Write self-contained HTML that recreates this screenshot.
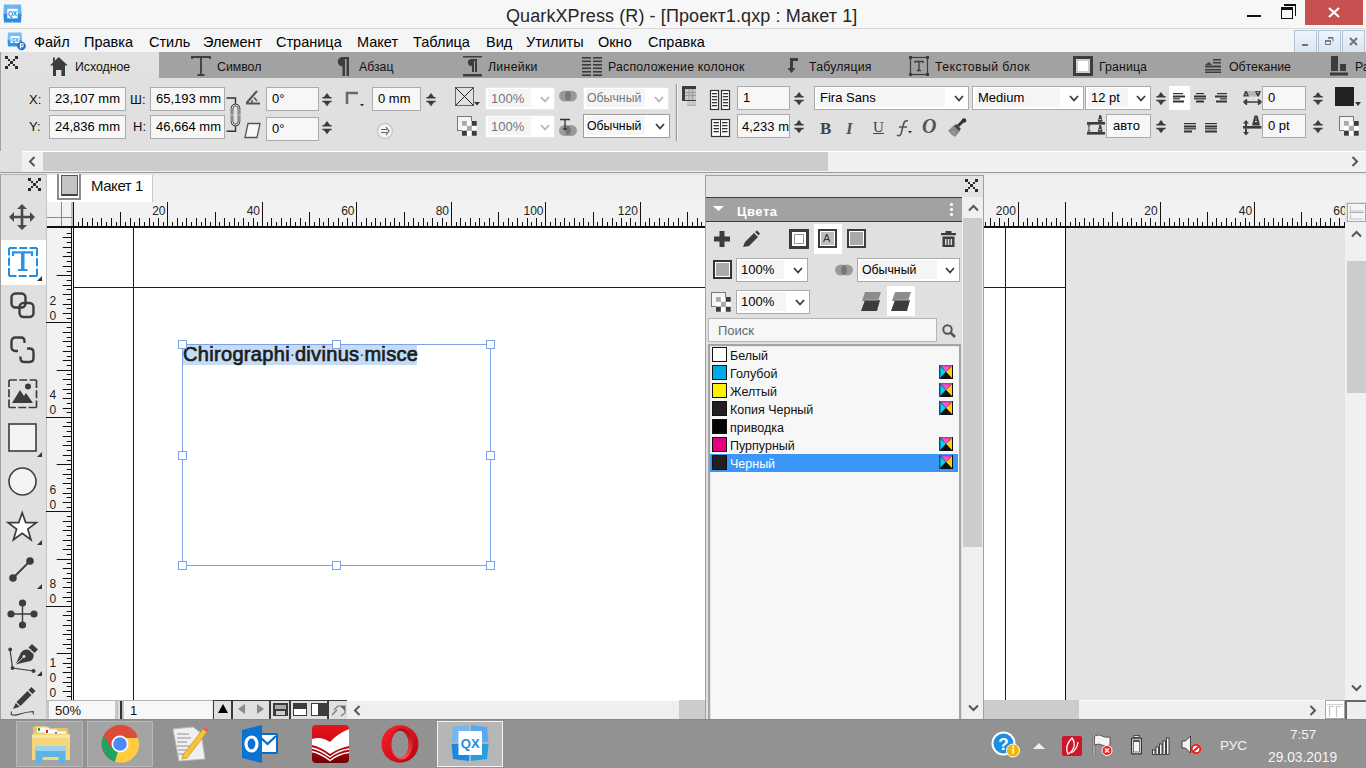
<!DOCTYPE html>
<html><head><meta charset="utf-8">
<style>
*{margin:0;padding:0;box-sizing:border-box}
html,body{width:1366px;height:768px;overflow:hidden;background:#e0e0e0;font-family:"Liberation Sans",sans-serif;color:#000}
.a{position:absolute}
.t{position:absolute;white-space:nowrap;line-height:1}
svg{position:absolute;overflow:visible}
.fld{position:absolute;background:#f7f7f7;border:1px solid #ababab}
.cmb{position:absolute;background:#fff;border:1px solid #ababab}
.spin{position:absolute;width:10px;height:18px}
</style></head><body>
<!-- TITLE BAR -->
<div class="a" style="left:0;top:0;width:1366px;height:29px;background:#f7f7f7;border-bottom:1px solid #d9d9d9"></div>
<svg style="left:3px;top:4px" width="19" height="19" viewBox="0 0 19 19"><path d="M1 0.5H18L18.6 9.5H0.4z" fill="#6cb3ef"/><path d="M0.4 9.5H18.6L18 18.5H1z" fill="#2a8ce4"/><path d="M9.5 0.5V2M9.5 17V18.5" stroke="#b8dcf8" stroke-width="0.8"/><rect x="4.3" y="4.8" width="10.4" height="9.6" fill="#fff"/><text x="9.5" y="12.3" font-size="6.4" font-weight="bold" fill="#2088e3" text-anchor="middle" font-family="Liberation Sans">QX</text></svg>
<div class="t" style="left:506px;top:7px;font-size:18px;color:#262626;letter-spacing:0.1px">QuarkXPress (R) - [Проект1.qxp : Макет 1]</div>
<div class="a" style="left:1247px;top:15px;width:14px;height:2px;background:#111"></div>
<div class="a" style="left:1281px;top:7px;width:12px;height:12px;border:1.5px solid #111;border-top-width:3px"></div>
<div class="a" style="left:1284px;top:4px;width:12px;height:12px;border-top:2px solid #111;border-right:1.5px solid #111"></div>
<div class="a" style="left:1305px;top:0;width:58px;height:25px;background:#c75050"></div>
<svg style="left:1328px;top:7px" width="12" height="11"><path d="M1 1L11 10M11 1L1 10" stroke="#fff" stroke-width="2.2"/></svg>
<!-- MENU BAR -->
<div class="a" style="left:0;top:29px;width:1366px;height:23px;background:#f4f5f7"></div>
<svg style="left:7px;top:32px" width="19" height="19" viewBox="0 0 19 19"><path d="M1 0.5H14.5L15 7.5H0.5z" fill="#7bbcf1"/><path d="M0.5 7.5H15L14.5 14.5H1z" fill="#3592e6"/><rect x="3.5" y="4" width="9" height="7" fill="#fff"/><text x="8" y="9.8" font-size="5.2" font-weight="bold" fill="#2a8ae3" text-anchor="middle" font-family="Liberation Sans">QX</text><circle cx="14.5" cy="14" r="4.3" fill="#1c6fc8"/><rect x="12.8" y="11.5" width="1.4" height="5" fill="#fff"/><rect x="13.5" y="11.8" width="2.5" height="2.8" fill="none" stroke="#fff" stroke-width="1"/></svg>
<div class="t" style="left:34px;top:35px;font-size:14.5px">Файл</div>
<div class="t" style="left:84px;top:35px;font-size:14.5px">Правка</div>
<div class="t" style="left:149px;top:35px;font-size:14.5px">Стиль</div>
<div class="t" style="left:203px;top:35px;font-size:14.5px">Элемент</div>
<div class="t" style="left:276px;top:35px;font-size:14.5px">Страница</div>
<div class="t" style="left:357px;top:35px;font-size:14.5px">Макет</div>
<div class="t" style="left:413px;top:35px;font-size:14.5px">Таблица</div>
<div class="t" style="left:486px;top:35px;font-size:14.5px">Вид</div>
<div class="t" style="left:526px;top:35px;font-size:14.5px">Утилиты</div>
<div class="t" style="left:598px;top:35px;font-size:14.5px">Окно</div>
<div class="t" style="left:648px;top:35px;font-size:14.5px">Справка</div>
<div class="a" style="left:1294px;top:30px;width:23px;height:22px;background:linear-gradient(#eef4fb,#d9e6f4);border:1px solid #b3c3d6;border-bottom:none"></div>
<div class="a" style="left:1318px;top:30px;width:23px;height:22px;background:linear-gradient(#eef4fb,#d9e6f4);border:1px solid #b3c3d6;border-bottom:none"></div>
<div class="a" style="left:1342px;top:30px;width:23px;height:22px;background:linear-gradient(#eef4fb,#d9e6f4);border:1px solid #b3c3d6;border-bottom:none"></div>
<div class="a" style="left:1302px;top:44px;width:6px;height:2px;background:#6b7480"></div>
<svg style="left:1325px;top:37px" width="9" height="8"><path d="M3 .5h5v4M.5 3.5h5v4h-5z" fill="none" stroke="#6b7480" stroke-width="1"/><path d="M3 1h5" stroke="#6b7480" stroke-width="1.5"/><path d="M.5 4h5" stroke="#6b7480" stroke-width="1.5"/></svg>
<svg style="left:1349px;top:37px" width="9" height="9"><path d="M1 1L8 8M8 1L1 8" stroke="#6b7480" stroke-width="2"/></svg>
<!-- TAB STRIP -->
<div class="a" style="left:0;top:52px;width:1366px;height:26px;background:#a2a2a2"></div>
<div class="a" style="left:0;top:52px;width:159px;height:26px;background:#e1e1e1;border-left:1px solid #a0a0a0"></div>
<svg style="left:5px;top:56px" width="13" height="13" viewBox="0 0 13 13"><g fill="#2a2a2a"><rect x="0" y="0" width="3" height="3"/><rect x="10" y="0" width="3" height="3"/><rect x="0" y="10" width="3" height="3"/><rect x="10" y="10" width="3" height="3"/><rect x="3" y="3" width="2" height="2"/><rect x="8" y="3" width="2" height="2"/><rect x="3" y="8" width="2" height="2"/><rect x="8" y="8" width="2" height="2"/><rect x="5" y="5" width="3" height="3"/></g></svg>
<svg style="left:50px;top:57px" width="18" height="20" viewBox="0 0 18 20"><path d="M0 8.5L8.7 0L17.8 8.5H15V19H11.4V13H6V19H3V8.5z" fill="#3c3c3c"/><rect x="3" y="0.5" width="1.8" height="6" fill="#3c3c3c"/></svg>
<div class="t" style="left:75px;top:61px;font-size:12.3px;color:#111">Исходное</div>
<svg style="left:191px;top:56px" width="20" height="20" viewBox="0 0 20 20"><path d="M1 3V1h18v2M10 1v18M6.5 19h7" fill="none" stroke="#3c3c3c" stroke-width="1.8"/></svg>
<div class="t" style="left:217px;top:61px;font-size:12.3px;color:#111">Символ</div>
<svg style="left:338px;top:57px" width="11" height="19" viewBox="0 0 11 19"><path d="M4.5 0H11v19H8.5V2H7v17H4.5v-9.5A4.75 4.75 0 0 1 4.5 0z" fill="#3c3c3c"/></svg>
<div class="t" style="left:359px;top:61px;font-size:12.3px;color:#111">Абзац</div>
<svg style="left:463px;top:56px" width="19" height="21" viewBox="0 0 19 21"><rect x="0" y="0" width="19" height="1.5" fill="#3c3c3c"/><rect x="0" y="18" width="19" height="2.5" fill="#3c3c3c"/><path d="M8 3H14v13H12V5H11v11H9v-6A3.5 3.5 0 0 1 8 3z" fill="#3c3c3c"/></svg>
<div class="t" style="left:488px;top:61px;font-size:12.3px;color:#111;letter-spacing:0.3px">Линейки</div>
<svg style="left:582px;top:57px" width="20" height="19" viewBox="0 0 20 19"><g fill="#3c3c3c"><rect x="0" y="0" width="9" height="1.6"/><rect x="0" y="3.5" width="9" height="1.6"/><rect x="0" y="7" width="9" height="1.6"/><rect x="0" y="10.5" width="9" height="1.6"/><rect x="0" y="14" width="9" height="1.6"/><rect x="0" y="17.4" width="9" height="1.6"/><rect x="11" y="0" width="9" height="1.6"/><rect x="11" y="3.5" width="9" height="1.6"/><rect x="11" y="7" width="9" height="1.6"/><rect x="11" y="10.5" width="9" height="1.6"/><rect x="11" y="14" width="9" height="1.6"/><rect x="11" y="17.4" width="9" height="1.6"/></g></svg>
<div class="t" style="left:608px;top:61px;font-size:12.3px;color:#111;letter-spacing:0.22px">Расположение колонок</div>
<svg style="left:787px;top:58px" width="11" height="15" viewBox="0 0 11 15"><path d="M3 0H11V3H6V10H8.5L4.5 15L0.5 10H3z" fill="#3c3c3c"/></svg>
<div class="t" style="left:809px;top:61px;font-size:12.3px;color:#111;letter-spacing:0.2px">Табуляция</div>
<svg style="left:909px;top:56px" width="20" height="20" viewBox="0 0 20 20"><rect x="1.5" y="1.5" width="17" height="17" fill="none" stroke="#3c3c3c" stroke-width="1.2"/><g fill="#3c3c3c"><rect x="0" y="0" width="3" height="3"/><rect x="17" y="0" width="3" height="3"/><rect x="0" y="17" width="3" height="3"/><rect x="17" y="17" width="3" height="3"/></g><path d="M6 7V5.5h8V7M10 5.5v9M8 14.5h4" fill="none" stroke="#3c3c3c" stroke-width="1.3"/></svg>
<div class="t" style="left:935px;top:61px;font-size:12.3px;color:#111;letter-spacing:0.4px">Текстовый блок</div>
<svg style="left:1073px;top:56px" width="20" height="20" viewBox="0 0 20 20"><rect x="0" y="0" width="20" height="20" fill="#3c3c3c"/><rect x="3" y="3" width="14" height="14" fill="#fff"/><rect x="4" y="4" width="12" height="12" fill="none" stroke="#888" stroke-width="0.8"/></svg>
<div class="t" style="left:1099px;top:61px;font-size:12.3px;color:#111;letter-spacing:0.12px">Граница</div>
<svg style="left:1205px;top:59px" width="16" height="14" viewBox="0 0 16 14"><g fill="#3c3c3c"><path d="M0 6L4 3l3 3z"/><rect x="8" y="0" width="8" height="1.5"/><rect x="8" y="3" width="8" height="1.5"/><rect x="0" y="6.5" width="16" height="2"/><rect x="0" y="10" width="16" height="1.5"/><rect x="0" y="12.5" width="16" height="1.5"/></g></svg>
<div class="t" style="left:1229px;top:61px;font-size:12.3px;color:#111">Обтекание</div>
<svg style="left:1330px;top:56px" width="18" height="20" viewBox="0 0 18 20"><g fill="#3c3c3c"><rect x="1" y="0" width="7" height="15"/><rect x="10" y="8" width="6" height="7"/><rect x="0" y="16.5" width="18" height="3"/></g></svg>
<div class="t" style="left:1355px;top:61px;font-size:12.3px;color:#111">Ра</div>
<div class="a" style="left:0;top:78px;width:1366px;height:73px;background:#e0e0e0;border-left:1px solid #a0a0a0"></div>
<div class="t" style="left:29px;top:92.5px;font-size:13px;color:#111">X:</div>
<div class="t" style="left:29px;top:120.0px;font-size:13px;color:#111">Y:</div>
<div class="t" style="left:130px;top:92.5px;font-size:13px;color:#111">Ш:</div>
<div class="t" style="left:133px;top:120.0px;font-size:13px;color:#111">H:</div>
<div class="a" style="left:49px;top:87px;width:77px;height:24px;background:#f7f7f7;border:1px solid #ababab"></div>
<div class="t" style="left:55px;top:92.1px;font-size:13px;color:#000">23,107 mm</div>
<div class="a" style="left:49px;top:115px;width:77px;height:24px;background:#f7f7f7;border:1px solid #ababab"></div>
<div class="t" style="left:55px;top:120.1px;font-size:13px;color:#000">24,836 mm</div>
<div class="a" style="left:150px;top:87px;width:75px;height:24px;background:#f7f7f7;border:1px solid #ababab"></div>
<div class="t" style="left:156px;top:92.1px;font-size:13px;color:#000">65,193 mm</div>
<div class="a" style="left:150px;top:115px;width:75px;height:24px;background:#f7f7f7;border:1px solid #ababab"></div>
<div class="t" style="left:156px;top:120.1px;font-size:13px;color:#000">46,664 mm</div>
<svg style="left:226px;top:96px" width="16" height="37" viewBox="0 0 16 37"><path d="M0.5 2H9.5V9M9.5 28V35.3H0.5" fill="none" stroke="#333" stroke-width="1.4"/><g fill="none" stroke-linecap="butt"><path d="M6 18.5V12.5A3.5 3.5 0 0 1 13 12.5V18.5" stroke="#333" stroke-width="2.6"/><path d="M6 18.5V12.5A3.5 3.5 0 0 1 13 12.5V18.5" stroke="#fff" stroke-width="0.9"/><path d="M6 19.5V25.5A3.5 3.5 0 0 0 13 25.5V19.5" stroke="#333" stroke-width="2.6"/><path d="M6 19.5V25.5A3.5 3.5 0 0 0 13 25.5V19.5" stroke="#fff" stroke-width="0.9"/></g></svg>
<svg style="left:245px;top:89px" width="16" height="16" viewBox="0 0 16 16"><path d="M1 14.5H15M1.5 14L12 2" fill="none" stroke="#555" stroke-width="2"/><path d="M9 8.5L12 12" stroke="#555" stroke-width="1.5"/><path d="M7 11v4" stroke="#555" stroke-width="1.5"/></svg>
<div class="a" style="left:266px;top:87px;width:53px;height:24px;background:#f7f7f7;border:1px solid #ababab"></div>
<div class="t" style="left:272px;top:92.1px;font-size:13px;color:#000">0°</div>
<svg style="left:322px;top:93px" width="10" height="14" viewBox="0 0 10 14"><path d="M5 0L8 4H9.6V5.4H0.4V4H2z M0.4 7.8H9.6V9.2H8L5 13.2L2 9.2H0.4z" fill="#3c3c3c"/></svg>
<svg style="left:244px;top:122px" width="17" height="17" viewBox="0 0 17 17"><path d="M4 1.5H16L13 15.5H1z" fill="#f7f7f7" stroke="#555" stroke-width="1.3"/></svg>
<div class="a" style="left:266px;top:117px;width:53px;height:24px;background:#f7f7f7;border:1px solid #ababab"></div>
<div class="t" style="left:272px;top:122.1px;font-size:13px;color:#000">0°</div>
<svg style="left:322px;top:121px" width="10" height="14" viewBox="0 0 10 14"><path d="M5 0L8 4H9.6V5.4H0.4V4H2z M0.4 7.8H9.6V9.2H8L5 13.2L2 9.2H0.4z" fill="#3c3c3c"/></svg>
<svg style="left:345px;top:91px" width="20" height="16" viewBox="0 0 20 16"><path d="M2 13V2H13" fill="none" stroke="#6a6a6a" stroke-width="2.6"/><path d="M15 13h4l-2 2.5z" fill="#333"/></svg>
<div class="a" style="left:372px;top:87px;width:49px;height:24px;background:#f7f7f7;border:1px solid #ababab"></div>
<div class="t" style="left:378px;top:92.1px;font-size:13px;color:#000">0 mm</div>
<svg style="left:426px;top:93px" width="10" height="14" viewBox="0 0 10 14"><path d="M5 0L8 4H9.6V5.4H0.4V4H2z M0.4 7.8H9.6V9.2H8L5 13.2L2 9.2H0.4z" fill="#3c3c3c"/></svg>
<svg style="left:376px;top:122px" width="18" height="18" viewBox="0 0 18 18"><circle cx="9" cy="9" r="7.5" fill="#f4f4f4" stroke="#c8c8c8" stroke-width="1.5"/><path d="M5 7.5h6M5 10.5h6M10 5l3 4-3 4" fill="none" stroke="#666" stroke-width="1.2"/></svg>
<svg style="left:455px;top:87px" width="26" height="20" viewBox="0 0 26 20"><rect x="0.5" y="0.5" width="18" height="18" fill="none" stroke="#666" stroke-width="1"/><path d="M0.5 0.5L18.5 18.5M18.5 0.5L0.5 18.5" stroke="#222" stroke-width="1"/><path d="M19 15h6l-3 3.5z" fill="#333"/></svg>
<div class="a" style="left:485px;top:87px;width:70px;height:23px;background:#fff;border:1px solid #e6e6e6"></div>
<div class="a" style="left:488px;top:89px;width:43px;height:18px;background:#f5f5f5"></div>
<div class="t" style="left:491px;top:91.6px;font-size:13px;color:#777">100%</div>
<svg style="left:540px;top:95.5px" width="10" height="7" viewBox="0 0 10 7"><path d="M1 1L5 5.5 9 1" fill="none" stroke="#b4b4b4" stroke-width="1.8"/></svg>
<div class="a" style="left:485px;top:115px;width:70px;height:23px;background:#fff;border:1px solid #e6e6e6"></div>
<div class="a" style="left:488px;top:117px;width:43px;height:18px;background:#f5f5f5"></div>
<div class="t" style="left:491px;top:119.6px;font-size:13px;color:#777">100%</div>
<svg style="left:540px;top:123.5px" width="10" height="7" viewBox="0 0 10 7"><path d="M1 1L5 5.5 9 1" fill="none" stroke="#b4b4b4" stroke-width="1.8"/></svg>
<svg style="left:457px;top:116px" width="21" height="21" viewBox="0 0 21 21"><rect x="0.5" y="0.5" width="14" height="14" fill="#f4f4f4" stroke="#777" stroke-width="1"/><rect x="5" y="5" width="4.9" height="4.9" fill="#aaa"/><rect x="9.9" y="5" width="4.9" height="4.9" fill="#fff"/><rect x="14.8" y="5" width="4.9" height="4.9" fill="#3c3c3c"/><rect x="5" y="9.9" width="4.9" height="4.9" fill="#fff"/><rect x="9.9" y="9.9" width="4.9" height="4.9" fill="#aaa"/><rect x="14.8" y="9.9" width="4.9" height="4.9" fill="#fff"/><rect x="5" y="14.8" width="4.9" height="4.9" fill="#3c3c3c"/><rect x="9.9" y="14.8" width="4.9" height="4.9" fill="#fff"/><rect x="14.8" y="14.8" width="4.9" height="4.9" fill="#3c3c3c"/></svg>
<svg style="left:559px;top:90px" width="18" height="12" viewBox="0 0 18 12"><ellipse cx="6" cy="6" rx="6" ry="5.5" fill="#9a9a9a"/><ellipse cx="12" cy="6" rx="6" ry="5.5" fill="#9a9a9a"/><ellipse cx="9" cy="6" rx="3" ry="5" fill="#777"/></svg>
<svg style="left:559px;top:118px" width="18" height="19" viewBox="0 0 18 19"><ellipse cx="6" cy="12.5" rx="6" ry="5.5" fill="#9a9a9a"/><ellipse cx="12" cy="12.5" rx="6" ry="5.5" fill="#9a9a9a"/><ellipse cx="9" cy="12.5" rx="3" ry="5" fill="#777"/><path d="M1 1.5H11M6 1.5V11M4 11h4" stroke="#333" stroke-width="1.3" fill="none"/></svg>
<div class="a" style="left:583px;top:87px;width:86px;height:23px;background:#fff;border:1px solid #e6e6e6"></div>
<div class="a" style="left:586px;top:89px;width:59px;height:18px;background:#f5f5f5"></div>
<div class="t" style="left:587px;top:92.2px;font-size:12.3px;color:#777">Обычный</div>
<svg style="left:654px;top:95.5px" width="10" height="7" viewBox="0 0 10 7"><path d="M1 1L5 5.5 9 1" fill="none" stroke="#b4b4b4" stroke-width="1.8"/></svg>
<div class="a" style="left:583px;top:114px;width:87px;height:24px;background:#fff;border:1px solid #9c9c9c"></div>
<div class="a" style="left:586px;top:116px;width:59px;height:19px;background:#f5f5f5"></div>
<div class="t" style="left:587px;top:119.7px;font-size:12.3px;color:#000">Обычный</div>
<svg style="left:655px;top:123.0px" width="10" height="7" viewBox="0 0 10 7"><path d="M1 1L5 5.5 9 1" fill="none" stroke="#3c3c3c" stroke-width="1.8"/></svg>
<div class="a" style="left:675px;top:84px;width:3px;height:57px;background:#9a9a9a;border-right:1px solid #f4f4f4;border-left:1px solid #d0d0d0"></div>
<svg style="left:682px;top:86px" width="15" height="20" viewBox="0 0 15 20"><rect x="0" y="0" width="14" height="15" fill="#3c3c3c"/><rect x="3" y="3" width="11" height="11" fill="#c4c4c4"/><path d="M3 6.5H14M3 9.5H14M7 3V14M10.5 3V14" stroke="#9a9a9a" stroke-width="1"/><rect x="5" y="15" width="9" height="4.5" fill="#c8c8c8"/><rect x="5" y="18.8" width="9" height="1" fill="#a8a8a8"/></svg>
<svg style="left:710px;top:90px" width="20" height="20" viewBox="0 0 20 20"><rect x="0.5" y="0.5" width="8" height="19" fill="#fff" stroke="#333" stroke-width="1.2"/><rect x="11.5" y="0.5" width="8" height="19" fill="#fff" stroke="#333" stroke-width="1.2"/><g fill="#333"><rect x="2" y="3" width="5" height="1.3"/><rect x="2" y="6" width="5" height="1.3"/><rect x="2" y="9" width="5" height="1.3"/><rect x="2" y="12" width="5" height="1.3"/><rect x="2" y="15" width="5" height="1.3"/><rect x="13" y="3" width="5" height="1.3"/><rect x="13" y="6" width="5" height="1.3"/><rect x="13" y="9" width="5" height="1.3"/><rect x="13" y="12" width="5" height="1.3"/><rect x="13" y="15" width="5" height="1.3"/></g></svg>
<div class="a" style="left:737px;top:86px;width:53px;height:24px;background:#f7f7f7;border:1px solid #ababab"></div>
<div class="t" style="left:743px;top:91.1px;font-size:13px;color:#000">1</div>
<svg style="left:794px;top:92px" width="10" height="14" viewBox="0 0 10 14"><path d="M5 0L8 4H9.6V5.4H0.4V4H2z M0.4 7.8H9.6V9.2H8L5 13.2L2 9.2H0.4z" fill="#3c3c3c"/></svg>
<svg style="left:711px;top:119px" width="19" height="18" viewBox="0 0 19 18"><rect x="0.5" y="0.5" width="18" height="17" fill="#fff" stroke="#333" stroke-width="1.2"/><g fill="#333"><rect x="2.5" y="3" width="5.5" height="1.3"/><rect x="2.5" y="6" width="5.5" height="1.3"/><rect x="2.5" y="9" width="5.5" height="1.3"/><rect x="2.5" y="12" width="5.5" height="1.3"/><rect x="11" y="3" width="5.5" height="1.3"/><rect x="11" y="6" width="5.5" height="1.3"/><rect x="11" y="9" width="5.5" height="1.3"/><rect x="11" y="12" width="5.5" height="1.3"/><rect x="9" y="1" width="1" height="16"/></g></svg>
<div class="a" style="left:737px;top:114px;width:53px;height:24px;background:#f7f7f7;border:1px solid #ababab;overflow:hidden"><div class="t" style="left:4px;top:5px;font-size:13px">4,233 mm</div></div>
<svg style="left:794px;top:120px" width="10" height="14" viewBox="0 0 10 14"><path d="M5 0L8 4H9.6V5.4H0.4V4H2z M0.4 7.8H9.6V9.2H8L5 13.2L2 9.2H0.4z" fill="#3c3c3c"/></svg>
<div class="a" style="left:814px;top:86px;width:155px;height:24px;background:#fff;border:1px solid #ababab"></div>
<div class="a" style="left:817px;top:88px;width:128px;height:19px;background:#f5f5f5"></div>
<div class="t" style="left:820px;top:91.1px;font-size:13px;color:#000">Fira Sans</div>
<svg style="left:954px;top:95.0px" width="10" height="7" viewBox="0 0 10 7"><path d="M1 1L5 5.5 9 1" fill="none" stroke="#3c3c3c" stroke-width="1.8"/></svg>
<div class="a" style="left:972px;top:86px;width:112px;height:24px;background:#fff;border:1px solid #ababab"></div>
<div class="a" style="left:975px;top:88px;width:85px;height:19px;background:#f5f5f5"></div>
<div class="t" style="left:978px;top:91.1px;font-size:13px;color:#000">Medium</div>
<svg style="left:1069px;top:95.0px" width="10" height="7" viewBox="0 0 10 7"><path d="M1 1L5 5.5 9 1" fill="none" stroke="#3c3c3c" stroke-width="1.8"/></svg>
<div class="a" style="left:1085px;top:86px;width:66px;height:24px;background:#fff;border:1px solid #ababab"></div>
<div class="a" style="left:1088px;top:88px;width:40px;height:19px;background:#f5f5f5"></div>
<div class="t" style="left:1091px;top:91.1px;font-size:13px;color:#000">12 pt</div>
<svg style="left:1136px;top:95.0px" width="10" height="7" viewBox="0 0 10 7"><path d="M1 1L5 5.5 9 1" fill="none" stroke="#3c3c3c" stroke-width="1.8"/></svg>
<svg style="left:1156px;top:92px" width="10" height="14" viewBox="0 0 10 14"><path d="M5 0L8 4H9.6V5.4H0.4V4H2z M0.4 7.8H9.6V9.2H8L5 13.2L2 9.2H0.4z" fill="#3c3c3c"/></svg>
<div class="t" style="left:820px;top:120px;font-size:17px;font-family:'Liberation Serif';font-weight:bold;color:#444">B</div>
<div class="t" style="left:846px;top:120px;font-size:17px;font-family:'Liberation Serif';font-style:italic;font-weight:bold;color:#555">I</div>
<div class="t" style="left:873px;top:120px;font-size:15px;font-family:'Liberation Serif';color:#444;text-decoration:underline">U</div>
<svg style="left:896px;top:119px" width="17" height="18" viewBox="0 0 17 18"><path d="M12 2C9 1 8 3 7 7L5 15C4 17 2 17 1 16M3 8h8" fill="none" stroke="#555" stroke-width="1.6"/><path d="M12 12h4l-2 2.5z" fill="#333"/></svg>
<div class="t" style="left:922px;top:116px;font-size:20px;font-family:'Liberation Serif';font-style:italic;font-weight:bold;color:#555">O</div>
<svg style="left:947px;top:118px" width="20" height="20" viewBox="0 0 20 20"><path d="M1 13L7 7L13 13L8 19z" fill="#8a8a8a"/><path d="M3 15l3 3M5 13l3 3" stroke="#aaa" stroke-width="1"/><path d="M7 8L9 6L14 11L12 13z" fill="#444"/><path d="M11 8L17 2" stroke="#333" stroke-width="3"/><circle cx="17" cy="2.5" r="2.3" fill="#333"/></svg>
<div class="a" style="left:1169px;top:86px;width:21px;height:24px;background:#fff"></div>
<svg style="left:1173px;top:93px" width="14" height="11" viewBox="0 0 14 11"><g fill="#333"><rect x="0" y="0" width="10" height="1.2"/><rect x="0" y="2.5" width="12" height="2"/><rect x="0" y="5.2" width="7" height="1.2"/><rect x="0" y="7.5" width="11" height="2"/></g></svg>
<svg style="left:1194px;top:93px" width="14" height="11" viewBox="0 0 14 11"><g fill="#333"><rect x="2" y="0" width="8" height="1.2"/><rect x="0" y="2.5" width="12" height="2"/><rect x="0" y="5.2" width="12" height="1.2"/><rect x="2" y="7.5" width="8" height="2"/></g></svg>
<svg style="left:1215px;top:93px" width="14" height="11" viewBox="0 0 14 11"><g fill="#333"><rect x="2" y="0" width="10" height="1.2"/><rect x="0" y="2.5" width="12" height="2"/><rect x="5" y="5.2" width="7" height="1.2"/><rect x="1" y="7.5" width="11" height="2"/></g></svg>
<svg style="left:1184px;top:123px" width="14" height="11" viewBox="0 0 14 11"><g fill="#333"><rect x="0" y="0" width="12" height="1.2"/><rect x="0" y="2.5" width="12" height="2"/><rect x="0" y="5.2" width="12" height="1.2"/><rect x="0" y="7.5" width="8" height="2"/></g></svg>
<svg style="left:1205px;top:123px" width="14" height="11" viewBox="0 0 14 11"><g fill="#333"><rect x="0" y="0" width="12" height="1.2"/><rect x="0" y="2.5" width="12" height="2"/><rect x="0" y="5.2" width="12" height="1.2"/><rect x="0" y="7.5" width="12" height="2"/></g></svg>
<svg style="left:1087px;top:115px" width="18" height="20" viewBox="0 0 18 20"><g fill="#3c3c3c"><rect x="0" y="7" width="18" height="2.6"/><rect x="0" y="17" width="18" height="2.6"/><path d="M10.8 6.8L12.4 0H14L15.6 6.8z"/><rect x="12.3" y="4" width="1.8" height="1" fill="#e0e0e0"/><path d="M10.8 16.8L12.4 10H14L15.6 16.8z"/><rect x="12.3" y="14" width="1.8" height="1" fill="#e0e0e0"/><path d="M0.5 10H3.5M0.5 16H3.5" stroke="#3c3c3c" stroke-width="1"/><rect x="1.5" y="10" width="1" height="6"/></g></svg>
<div class="a" style="left:1106px;top:114px;width:45px;height:24px;background:#f7f7f7;border:1px solid #ababab"></div>
<div class="t" style="left:1113px;top:119.1px;font-size:13px;color:#000">авто</div>
<svg style="left:1156px;top:120px" width="10" height="14" viewBox="0 0 10 14"><path d="M5 0L8 4H9.6V5.4H0.4V4H2z M0.4 7.8H9.6V9.2H8L5 13.2L2 9.2H0.4z" fill="#3c3c3c"/></svg>
<svg style="left:1243px;top:90px" width="19" height="17" viewBox="0 0 19 17"><rect x="5" y="1" width="8" height="5.5" fill="#b8b8b8"/><path d="M0 6.5L2 1H4L6 6.5z" fill="#444"/><rect x="2.2" y="4.2" width="1.6" height="0.9" fill="#ccc"/><path d="M12 1H18L16 6.5H14z" fill="#444"/><rect x="14.2" y="2" width="1.6" height="0.9" fill="#ccc"/><path d="M0.5 12H18.5M0.5 12L3 10M0.5 12L3 14M18.5 12L16 10M18.5 12L16 14M3.5 9V15M15.5 9V15" fill="none" stroke="#3c3c3c" stroke-width="1.3"/></svg>
<div class="a" style="left:1262px;top:86px;width:44px;height:24px;background:#f7f7f7;border:1px solid #ababab"></div>
<div class="t" style="left:1268px;top:91.1px;font-size:13px;color:#000">0</div>
<svg style="left:1313px;top:92px" width="10" height="14" viewBox="0 0 10 14"><path d="M5 0L8 4H9.6V5.4H0.4V4H2z M0.4 7.8H9.6V9.2H8L5 13.2L2 9.2H0.4z" fill="#3c3c3c"/></svg>
<svg style="left:1243px;top:115px" width="19" height="21" viewBox="0 0 19 21"><g fill="#3c3c3c"><path d="M9 10.5L11.5 0.5H14.5L17 10.5z"/><rect x="12" y="6" width="2" height="1.2" fill="#e0e0e0"/><rect x="12.5" y="2.5" width="1" height="3" fill="#888"/><rect x="0" y="11" width="18.5" height="2.6"/><path d="M3 5L6 8.5H4V11H2V8.5H0z"/><path d="M3 20.5L6 17H4V13.6H2V17H0z"/></g></svg>
<div class="a" style="left:1262px;top:114px;width:44px;height:24px;background:#f7f7f7;border:1px solid #ababab"></div>
<div class="t" style="left:1268px;top:119.1px;font-size:13px;color:#000">0 pt</div>
<svg style="left:1313px;top:120px" width="10" height="14" viewBox="0 0 10 14"><path d="M5 0L8 4H9.6V5.4H0.4V4H2z M0.4 7.8H9.6V9.2H8L5 13.2L2 9.2H0.4z" fill="#3c3c3c"/></svg>
<div class="a" style="left:1335px;top:87px;width:19px;height:19px;background:#222"></div>
<svg style="left:1355px;top:102px" width="6" height="4"><path d="M0 0h6L3 4z" fill="#333"/></svg>
<svg style="left:1339px;top:116px" width="21" height="21" viewBox="0 0 21 21"><rect x="0.5" y="0.5" width="14" height="14" fill="#f4f4f4" stroke="#777" stroke-width="1"/><rect x="5" y="5" width="4.9" height="4.9" fill="#aaa"/><rect x="9.9" y="5" width="4.9" height="4.9" fill="#fff"/><rect x="14.8" y="5" width="4.9" height="4.9" fill="#3c3c3c"/><rect x="5" y="9.9" width="4.9" height="4.9" fill="#fff"/><rect x="9.9" y="9.9" width="4.9" height="4.9" fill="#aaa"/><rect x="14.8" y="9.9" width="4.9" height="4.9" fill="#fff"/><rect x="5" y="14.8" width="4.9" height="4.9" fill="#3c3c3c"/><rect x="9.9" y="14.8" width="4.9" height="4.9" fill="#fff"/><rect x="14.8" y="14.8" width="4.9" height="4.9" fill="#3c3c3c"/></svg>
<div class="a" style="left:22px;top:151px;width:1344px;height:21px;background:#f0f0f0;border-top:1px solid #fff"></div>
<div class="a" style="left:43px;top:152px;width:785px;height:19px;background:#cccccc"></div>
<svg style="left:28px;top:156px" width="8" height="11" viewBox="0 0 8 11"><path d="M6.5 1L2 5.5 6.5 10" fill="none" stroke="#555" stroke-width="2"/></svg>
<svg style="left:1351px;top:156px" width="8" height="11" viewBox="0 0 8 11"><path d="M1.5 1L6 5.5 1.5 10" fill="none" stroke="#555" stroke-width="2"/></svg>
<div class="a" style="left:0;top:172px;width:1366px;height:1px;background:#9c9c9c"></div>
<div class="a" style="left:0;top:173px;width:1366px;height:2px;background:#e6e6e6"></div><div class="a" style="left:0;top:174px;width:47px;height:546px;background:#e0e0e0;border-left:1px solid #a0a0a0;border-top:1px solid #b4b4b4;border-right:1px solid #c4c4c4"></div>
<svg style="left:28px;top:178px" width="13" height="13" viewBox="0 0 13 13"><g fill="#2a2a2a"><rect x="0" y="0" width="3" height="3"/><rect x="10" y="0" width="3" height="3"/><rect x="0" y="10" width="3" height="3"/><rect x="10" y="10" width="3" height="3"/><rect x="3" y="3" width="2" height="2"/><rect x="8" y="3" width="2" height="2"/><rect x="3" y="8" width="2" height="2"/><rect x="8" y="8" width="2" height="2"/><rect x="5" y="5" width="3" height="3"/></g></svg>
<div class="a" style="left:1px;top:240px;width:45px;height:45px;background:#fff"></div>
<svg style="left:9px;top:204px" width="26" height="26" viewBox="0 0 26 26"><path d="M13 2V24M2 13H24" stroke="#4a4a4a" stroke-width="2.6"/><path d="M13 0L18 5H8zM13 26L18 21H8zM0 13L5 8V18zM26 13L21 8V18z" fill="#4a4a4a"/></svg>
<svg style="left:8px;top:247px" width="30" height="30" viewBox="0 0 30 30"><path d="M1 1H29M29 1V29M29 29H1M1 29V1" fill="none" stroke="#1f8fe8" stroke-width="2" stroke-dasharray="7.9 2.4"/><path d="M5 9V5.3H24V9" fill="none" stroke="#2a92e8" stroke-width="2.2"/><path d="M13 5.5H16.5V22.5H13z" fill="#2a92e8"/><path d="M10 22H19.5V24H10z" fill="#2a92e8"/></svg>
<svg style="left:37px;top:276px" width="5" height="5"><path d="M5 0V5H0z" fill="#333"/></svg>
<svg style="left:10px;top:292px" width="25" height="27" viewBox="0 0 25 27"><rect x="1.5" y="1.5" width="14" height="14" rx="4" fill="none" stroke="#3c3c3c" stroke-width="2.4"/><rect x="9.5" y="11" width="14" height="14" rx="4" fill="none" stroke="#3c3c3c" stroke-width="2.4"/></svg>
<svg style="left:10px;top:336px" width="25" height="28" viewBox="0 0 25 28"><path d="M8 15H5.5Q1.5 15 1.5 11V5.5Q1.5 1.5 5.5 1.5H11Q14.5 1.5 14.5 5.5V7" fill="none" stroke="#3c3c3c" stroke-width="2.4"/><path d="M17 12.5H19.5Q23.5 12.5 23.5 16.5V22Q23.5 26 19.5 26H14Q10.5 26 10.5 22V20.5" fill="none" stroke="#3c3c3c" stroke-width="2.4"/></svg>
<svg style="left:8px;top:379px" width="30" height="29" viewBox="0 0 30 29"><path d="M1 1H28.5M28.5 1V28.5M28.5 28.5H1M1 28.5V1" fill="none" stroke="#3c3c3c" stroke-width="1.7" stroke-dasharray="7.9 2.4"/><circle cx="20" cy="7.5" r="3" fill="#3c3c3c"/><path d="M4 24L12 11L16 17L18 14L25 24z" fill="#3c3c3c"/></svg>
<svg style="left:8px;top:423px" width="30" height="30" viewBox="0 0 30 30"><rect x="1" y="1" width="27" height="27" fill="#f4f4f4" stroke="#3c3c3c" stroke-width="1.6"/></svg>
<svg style="left:37px;top:452px" width="5" height="5"><path d="M5 0V5H0z" fill="#333"/></svg>
<svg style="left:8px;top:467px" width="30" height="30" viewBox="0 0 30 30"><circle cx="14.5" cy="14.5" r="13.5" fill="#f4f4f4" stroke="#3c3c3c" stroke-width="1.6"/></svg>
<svg style="left:7px;top:512px" width="31" height="30" viewBox="0 0 31 30"><path d="M15.2 0.8L18.7 10.6H29.4L20.8 17L24 27.8L15.2 21.3L6.4 27.8L9.6 17L1 10.6H11.7z" fill="#fff" stroke="#3c3c3c" stroke-width="1.7" stroke-linejoin="miter"/></svg>
<svg style="left:37px;top:540px" width="5" height="5"><path d="M5 0V5H0z" fill="#333"/></svg>
<svg style="left:8px;top:555px" width="28" height="28" viewBox="0 0 28 28"><path d="M5 23L22 6" stroke="#3c3c3c" stroke-width="1.8"/><circle cx="5" cy="23" r="3.8" fill="#3c3c3c"/><circle cx="22" cy="6" r="3.8" fill="#3c3c3c"/></svg>
<svg style="left:37px;top:584px" width="5" height="5"><path d="M5 0V5H0z" fill="#333"/></svg>
<svg style="left:7px;top:599px" width="31" height="30" viewBox="0 0 31 30"><path d="M4 15H27M15.5 4V26" stroke="#3c3c3c" stroke-width="1.4"/><circle cx="4" cy="15" r="3.6" fill="#3c3c3c"/><circle cx="27" cy="15" r="3.6" fill="#3c3c3c"/><circle cx="15.5" cy="4" r="3.6" fill="#3c3c3c"/><circle cx="15.5" cy="26" r="3.6" fill="#3c3c3c"/></svg>
<svg style="left:8px;top:643px" width="31" height="30" viewBox="0 0 31 30"><path d="M2 6.5L4.5 25L25.5 28" fill="none" stroke="#3c3c3c" stroke-width="1.2"/><circle cx="2.2" cy="6.5" r="1.9" fill="#3c3c3c"/><circle cx="4.5" cy="25" r="1.9" fill="#3c3c3c"/><circle cx="25.5" cy="28" r="2" fill="#3c3c3c"/><path d="M7.5 21.5L13 9.5Q16 5.5 21 7L25.5 11Q26.5 15.5 22.5 18z" fill="#3c3c3c"/><path d="M20.5 4.5L24 1L30 6.5L26.5 10z" fill="#3c3c3c"/><path d="M7.5 21.5L16 13.5" stroke="#e0e0e0" stroke-width="0.9"/><circle cx="16" cy="13.5" r="1.4" fill="#e8e8e8"/></svg>
<svg style="left:37px;top:671px" width="5" height="5"><path d="M5 0V5H0z" fill="#333"/></svg>
<svg style="left:9px;top:686px" width="28" height="31" viewBox="0 0 28 31"><path d="M7.5 16L18.5 5L22.5 9L11.5 20z" fill="#3c3c3c"/><path d="M19.5 4L22.5 1L26.5 5L23.5 8z" fill="#3c3c3c"/><path d="M6.8 17L10.6 20.8L4 23z" fill="#3c3c3c"/><path d="M2.5 25.5L2.2 28.5Q5 30 11 28Q17 26 24 25.5L24.5 28.5" fill="none" stroke="#3c3c3c" stroke-width="1.1"/></svg>
<div class="a" style="left:47px;top:175px;width:658px;height:27px;background:#f0f0f0"></div>
<div class="a" style="left:47px;top:175px;width:106px;height:27px;background:#fff;border-right:1px solid #c8c8c8"></div>
<div class="a" style="left:57px;top:174px;width:24px;height:26px;border:2px solid #8c8c8c;border-top:none;background:#fff"></div>
<div class="a" style="left:61px;top:175px;width:17px;height:21px;background:#c4c4c4;border:1px solid #555;border-bottom:2px solid #444"></div>
<div class="t" style="left:91px;top:177.8px;font-size:15px;letter-spacing:-0.45px;color:#111">Макет 1</div>
<div class="a" style="left:47px;top:202px;width:658px;height:26px;background:#f2f2f2"></div>
<div class="a" style="left:984px;top:202px;width:361px;height:26px;background:#f2f2f2"></div>
<svg style="left:73px;top:202px;overflow:hidden" width="632" height="26"><g stroke="#111" stroke-width="1"><path d="M0.5 0V25"/><path d="M5.5 20V25"/><path d="M9.5 16V25"/><path d="M14.5 20V25"/><path d="M19.5 16V25"/><path d="M24.5 20V25"/><path d="M28.5 16V25"/><path d="M33.5 20V25"/><path d="M38.5 16V25"/><path d="M43.5 20V25"/><path d="M47.5 10V25"/><path d="M52.5 20V25"/><path d="M57.5 16V25"/><path d="M61.5 20V25"/><path d="M66.5 16V25"/><path d="M71.5 20V25"/><path d="M76.5 16V25"/><path d="M80.5 20V25"/><path d="M85.5 16V25"/><path d="M90.5 20V25"/><path d="M94.5 0V25"/><path d="M99.5 20V25"/><path d="M104.5 16V25"/><path d="M109.5 20V25"/><path d="M113.5 16V25"/><path d="M118.5 20V25"/><path d="M123.5 16V25"/><path d="M128.5 20V25"/><path d="M132.5 16V25"/><path d="M137.5 20V25"/><path d="M142.5 10V25"/><path d="M146.5 20V25"/><path d="M151.5 16V25"/><path d="M156.5 20V25"/><path d="M161.5 16V25"/><path d="M165.5 20V25"/><path d="M170.5 16V25"/><path d="M175.5 20V25"/><path d="M180.5 16V25"/><path d="M184.5 20V25"/><path d="M189.5 0V25"/><path d="M194.5 20V25"/><path d="M198.5 16V25"/><path d="M203.5 20V25"/><path d="M208.5 16V25"/><path d="M213.5 20V25"/><path d="M217.5 16V25"/><path d="M222.5 20V25"/><path d="M227.5 16V25"/><path d="M232.5 20V25"/><path d="M236.5 10V25"/><path d="M241.5 20V25"/><path d="M246.5 16V25"/><path d="M250.5 20V25"/><path d="M255.5 16V25"/><path d="M260.5 20V25"/><path d="M265.5 16V25"/><path d="M269.5 20V25"/><path d="M274.5 16V25"/><path d="M279.5 20V25"/><path d="M283.5 0V25"/><path d="M288.5 20V25"/><path d="M293.5 16V25"/><path d="M298.5 20V25"/><path d="M302.5 16V25"/><path d="M307.5 20V25"/><path d="M312.5 16V25"/><path d="M317.5 20V25"/><path d="M321.5 16V25"/><path d="M326.5 20V25"/><path d="M331.5 10V25"/><path d="M335.5 20V25"/><path d="M340.5 16V25"/><path d="M345.5 20V25"/><path d="M350.5 16V25"/><path d="M354.5 20V25"/><path d="M359.5 16V25"/><path d="M364.5 20V25"/><path d="M369.5 16V25"/><path d="M373.5 20V25"/><path d="M378.5 0V25"/><path d="M383.5 20V25"/><path d="M387.5 16V25"/><path d="M392.5 20V25"/><path d="M397.5 16V25"/><path d="M402.5 20V25"/><path d="M406.5 16V25"/><path d="M411.5 20V25"/><path d="M416.5 16V25"/><path d="M420.5 20V25"/><path d="M425.5 10V25"/><path d="M430.5 20V25"/><path d="M435.5 16V25"/><path d="M439.5 20V25"/><path d="M444.5 16V25"/><path d="M449.5 20V25"/><path d="M454.5 16V25"/><path d="M458.5 20V25"/><path d="M463.5 16V25"/><path d="M468.5 20V25"/><path d="M472.5 0V25"/><path d="M477.5 20V25"/><path d="M482.5 16V25"/><path d="M487.5 20V25"/><path d="M491.5 16V25"/><path d="M496.5 20V25"/><path d="M501.5 16V25"/><path d="M506.5 20V25"/><path d="M510.5 16V25"/><path d="M515.5 20V25"/><path d="M520.5 10V25"/><path d="M524.5 20V25"/><path d="M529.5 16V25"/><path d="M534.5 20V25"/><path d="M539.5 16V25"/><path d="M543.5 20V25"/><path d="M548.5 16V25"/><path d="M553.5 20V25"/><path d="M557.5 16V25"/><path d="M562.5 20V25"/><path d="M567.5 0V25"/><path d="M572.5 20V25"/><path d="M576.5 16V25"/><path d="M581.5 20V25"/><path d="M586.5 16V25"/><path d="M591.5 20V25"/><path d="M595.5 16V25"/><path d="M600.5 20V25"/><path d="M605.5 16V25"/><path d="M609.5 20V25"/><path d="M614.5 10V25"/><path d="M619.5 20V25"/><path d="M624.5 16V25"/><path d="M628.5 20V25"/></g><text x="92.5" y="12.5" font-size="12" text-anchor="end" fill="#222" font-family="Liberation Sans">20</text><text x="187.0" y="12.5" font-size="12" text-anchor="end" fill="#222" font-family="Liberation Sans">40</text><text x="281.5" y="12.5" font-size="12" text-anchor="end" fill="#222" font-family="Liberation Sans">60</text><text x="376.0" y="12.5" font-size="12" text-anchor="end" fill="#222" font-family="Liberation Sans">80</text><text x="470.5" y="12.5" font-size="12" text-anchor="end" fill="#222" font-family="Liberation Sans">100</text><text x="564.9" y="12.5" font-size="12" text-anchor="end" fill="#222" font-family="Liberation Sans">120</text><text x="659.4" y="12.5" font-size="12" text-anchor="end" fill="#222" font-family="Liberation Sans">140</text><rect x="0" y="24" width="632" height="2" fill="#111"/></svg>
<svg style="left:984px;top:202px;overflow:hidden" width="361" height="26"><g stroke="#111" stroke-width="1"><path d="M1.5 20V25"/><path d="M6.5 16V25"/><path d="M10.5 20V25"/><path d="M15.5 16V25"/><path d="M20.5 20V25"/><path d="M24.5 16V25"/><path d="M29.5 20V25"/><path d="M34.5 0V25"/><path d="M39.5 20V25"/><path d="M43.5 16V25"/><path d="M48.5 20V25"/><path d="M53.5 16V25"/><path d="M58.5 20V25"/><path d="M62.5 16V25"/><path d="M67.5 20V25"/><path d="M72.5 16V25"/><path d="M76.5 20V25"/><path d="M81.5 0V25"/><path d="M81.5 0V25"/><path d="M86.5 20V25"/><path d="M91.5 16V25"/><path d="M95.5 20V25"/><path d="M100.5 16V25"/><path d="M105.5 20V25"/><path d="M109.5 16V25"/><path d="M114.5 20V25"/><path d="M119.5 16V25"/><path d="M124.5 20V25"/><path d="M128.5 10V25"/><path d="M133.5 20V25"/><path d="M138.5 16V25"/><path d="M143.5 20V25"/><path d="M147.5 16V25"/><path d="M152.5 20V25"/><path d="M157.5 16V25"/><path d="M161.5 20V25"/><path d="M166.5 16V25"/><path d="M171.5 20V25"/><path d="M176.5 0V25"/><path d="M180.5 20V25"/><path d="M185.5 16V25"/><path d="M190.5 20V25"/><path d="M195.5 16V25"/><path d="M199.5 20V25"/><path d="M204.5 16V25"/><path d="M209.5 20V25"/><path d="M213.5 16V25"/><path d="M218.5 20V25"/><path d="M223.5 10V25"/><path d="M228.5 20V25"/><path d="M232.5 16V25"/><path d="M237.5 20V25"/><path d="M242.5 16V25"/><path d="M247.5 20V25"/><path d="M251.5 16V25"/><path d="M256.5 20V25"/><path d="M261.5 16V25"/><path d="M265.5 20V25"/><path d="M270.5 0V25"/><path d="M275.5 20V25"/><path d="M280.5 16V25"/><path d="M284.5 20V25"/><path d="M289.5 16V25"/><path d="M294.5 20V25"/><path d="M298.5 16V25"/><path d="M303.5 20V25"/><path d="M308.5 16V25"/><path d="M313.5 20V25"/><path d="M317.5 10V25"/><path d="M322.5 20V25"/><path d="M327.5 16V25"/><path d="M332.5 20V25"/><path d="M336.5 16V25"/><path d="M341.5 20V25"/><path d="M346.5 16V25"/><path d="M350.5 20V25"/><path d="M355.5 16V25"/><path d="M360.5 20V25"/></g><text x="31.9" y="12.5" font-size="12" text-anchor="end" fill="#222" font-family="Liberation Sans">200</text><text x="173.6" y="12.5" font-size="12" text-anchor="end" fill="#222" font-family="Liberation Sans">20</text><text x="268.1" y="12.5" font-size="12" text-anchor="end" fill="#222" font-family="Liberation Sans">40</text><text x="362.6" y="12.5" font-size="12" text-anchor="end" fill="#222" font-family="Liberation Sans">60</text><rect x="0" y="24" width="361" height="2" fill="#111"/></svg>
<svg style="left:47px;top:202px" width="27" height="26"><path d="M14.5 0V24M25 0V24M0 15.5H25" stroke="#888" stroke-width="1"/><path d="M26.5 0V26" stroke="#111" stroke-width="1"/><rect x="0" y="24" width="27" height="2" fill="#111"/></svg>
<div class="a" style="left:47px;top:228px;width:26px;height:472px;background:#f2f2f2"></div>
<svg style="left:47px;top:228px" width="27" height="472"><g stroke="#111" stroke-width="1"><path d="M19.7 5.5H24"/><path d="M15.7 9.5H24"/><path d="M19.7 14.5H24"/><path d="M15.7 19.5H24"/><path d="M19.7 24.5H24"/><path d="M15.7 28.5H24"/><path d="M19.7 33.5H24"/><path d="M15.7 38.5H24"/><path d="M19.7 43.5H24"/><path d="M9.7 47.5H24"/><path d="M19.7 52.5H24"/><path d="M15.7 57.5H24"/><path d="M19.7 61.5H24"/><path d="M15.7 66.5H24"/><path d="M19.7 71.5H24"/><path d="M15.7 76.5H24"/><path d="M19.7 80.5H24"/><path d="M15.7 85.5H24"/><path d="M19.7 90.5H24"/><path d="M-1 94.5H24"/><path d="M19.7 99.5H24"/><path d="M15.7 104.5H24"/><path d="M19.7 109.5H24"/><path d="M15.7 113.5H24"/><path d="M19.7 118.5H24"/><path d="M15.7 123.5H24"/><path d="M19.7 128.5H24"/><path d="M15.7 132.5H24"/><path d="M19.7 137.5H24"/><path d="M9.7 142.5H24"/><path d="M19.7 146.5H24"/><path d="M15.7 151.5H24"/><path d="M19.7 156.5H24"/><path d="M15.7 161.5H24"/><path d="M19.7 165.5H24"/><path d="M15.7 170.5H24"/><path d="M19.7 175.5H24"/><path d="M15.7 180.5H24"/><path d="M19.7 184.5H24"/><path d="M-1 189.5H24"/><path d="M19.7 194.5H24"/><path d="M15.7 198.5H24"/><path d="M19.7 203.5H24"/><path d="M15.7 208.5H24"/><path d="M19.7 213.5H24"/><path d="M15.7 217.5H24"/><path d="M19.7 222.5H24"/><path d="M15.7 227.5H24"/><path d="M19.7 232.5H24"/><path d="M9.7 236.5H24"/><path d="M19.7 241.5H24"/><path d="M15.7 246.5H24"/><path d="M19.7 250.5H24"/><path d="M15.7 255.5H24"/><path d="M19.7 260.5H24"/><path d="M15.7 265.5H24"/><path d="M19.7 269.5H24"/><path d="M15.7 274.5H24"/><path d="M19.7 279.5H24"/><path d="M-1 283.5H24"/><path d="M19.7 288.5H24"/><path d="M15.7 293.5H24"/><path d="M19.7 298.5H24"/><path d="M15.7 302.5H24"/><path d="M19.7 307.5H24"/><path d="M15.7 312.5H24"/><path d="M19.7 317.5H24"/><path d="M15.7 321.5H24"/><path d="M19.7 326.5H24"/><path d="M9.7 331.5H24"/><path d="M19.7 335.5H24"/><path d="M15.7 340.5H24"/><path d="M19.7 345.5H24"/><path d="M15.7 350.5H24"/><path d="M19.7 354.5H24"/><path d="M15.7 359.5H24"/><path d="M19.7 364.5H24"/><path d="M15.7 369.5H24"/><path d="M19.7 373.5H24"/><path d="M-1 378.5H24"/><path d="M19.7 383.5H24"/><path d="M15.7 387.5H24"/><path d="M19.7 392.5H24"/><path d="M15.7 397.5H24"/><path d="M19.7 402.5H24"/><path d="M15.7 406.5H24"/><path d="M19.7 411.5H24"/><path d="M15.7 416.5H24"/><path d="M19.7 420.5H24"/><path d="M9.7 425.5H24"/><path d="M19.7 430.5H24"/><path d="M15.7 435.5H24"/><path d="M19.7 439.5H24"/><path d="M15.7 444.5H24"/><path d="M19.7 449.5H24"/><path d="M15.7 454.5H24"/><path d="M19.7 458.5H24"/><path d="M15.7 463.5H24"/><path d="M19.7 468.5H24"/></g><text x="2.5" y="76.5" font-size="12" fill="#222" font-family="Liberation Sans">2</text><text x="2.5" y="91.5" font-size="12" fill="#222" font-family="Liberation Sans">0</text><text x="2.5" y="171.0" font-size="12" fill="#222" font-family="Liberation Sans">4</text><text x="2.5" y="186.0" font-size="12" fill="#222" font-family="Liberation Sans">0</text><text x="2.5" y="265.5" font-size="12" fill="#222" font-family="Liberation Sans">6</text><text x="2.5" y="280.5" font-size="12" fill="#222" font-family="Liberation Sans">0</text><text x="2.5" y="360.0" font-size="12" fill="#222" font-family="Liberation Sans">8</text><text x="2.5" y="375.0" font-size="12" fill="#222" font-family="Liberation Sans">0</text><text x="2.5" y="439.4" font-size="12" fill="#222" font-family="Liberation Sans">1</text><text x="2.5" y="454.4" font-size="12" fill="#222" font-family="Liberation Sans">0</text><text x="2.5" y="469.4" font-size="12" fill="#222" font-family="Liberation Sans">0</text><rect x="24" y="0" width="1" height="472" fill="#111"/><rect x="26" y="0" width="1" height="472" fill="#111"/></svg>
<div class="a" style="left:74px;top:228px;width:631px;height:472px;background:#fff"></div>
<div class="a" style="left:133px;top:228px;width:1px;height:472px;background:#0000ff"></div>
<div class="a" style="left:74px;top:287px;width:631px;height:1px;background:#0000ff"></div>
<div class="a" style="left:183px;top:345px;width:234px;height:20px;background:#c5dcf6"></div>
<div class="t" style="left:183px;top:344px;font-size:20px;color:#1c1c1c;-webkit-text-stroke:0.7px #1c1c1c;letter-spacing:0.32px">Chirographi<span style="-webkit-text-stroke:0;font-size:14px;vertical-align:2px">·</span>divinus<span style="-webkit-text-stroke:0;font-size:14px;vertical-align:2px">·</span>misce</div>
<div class="a" style="left:182px;top:344px;width:309px;height:222px;border:1px solid #7ba4e8"></div>
<div class="a" style="left:178px;top:340px;width:9px;height:9px;background:#fff;border:1px solid #7ba4e8"></div>
<div class="a" style="left:332px;top:340px;width:9px;height:9px;background:#fff;border:1px solid #7ba4e8"></div>
<div class="a" style="left:486px;top:340px;width:9px;height:9px;background:#fff;border:1px solid #7ba4e8"></div>
<div class="a" style="left:178px;top:451px;width:9px;height:9px;background:#fff;border:1px solid #7ba4e8"></div>
<div class="a" style="left:486px;top:451px;width:9px;height:9px;background:#fff;border:1px solid #7ba4e8"></div>
<div class="a" style="left:178px;top:561px;width:9px;height:9px;background:#fff;border:1px solid #7ba4e8"></div>
<div class="a" style="left:332px;top:561px;width:9px;height:9px;background:#fff;border:1px solid #7ba4e8"></div>
<div class="a" style="left:486px;top:561px;width:9px;height:9px;background:#fff;border:1px solid #7ba4e8"></div>
<div class="a" style="left:47px;top:700px;width:658px;height:20px;background:#e6e6e6"></div>
<div class="a" style="left:47px;top:700px;width:300px;height:1px;background:#b4b4b4"></div>
<div class="a" style="left:47px;top:701px;width:70px;height:19px;background:#f7f7f7;border-left:2px solid #c8c8c8;border-right:2px solid #c8c8c8"></div>
<div class="t" style="left:55px;top:704px;font-size:13px;color:#111">50%</div>
<div class="a" style="left:117px;top:701px;width:6px;height:19px;background:#e0e0e0;border-left:1px solid #bbb;border-right:1px solid #bbb"></div>
<div class="a" style="left:119.5px;top:701px;width:2px;height:19px;background:#333"></div>
<div class="a" style="left:123px;top:701px;width:89px;height:19px;background:#f7f7f7;border-left:1px solid #c8c8c8"></div>
<div class="t" style="left:130px;top:704px;font-size:13px;color:#111">1</div>
<div class="a" style="left:213px;top:700px;width:134px;height:20px;background:#3a3a3a"></div>
<div class="a" style="left:214px;top:701px;width:17px;height:18px;background:#e0e0e0"></div>
<svg style="left:218px;top:704px" width="10" height="9"><path d="M5 0L10 9H0z" fill="#000"/></svg>
<div class="a" style="left:233px;top:701px;width:36px;height:18px;background:#e0e0e0"></div>
<svg style="left:238px;top:704px" width="26" height="10"><path d="M7 0V10L0 5z M19 0V10L26 5z" fill="#8a8a8a"/></svg>
<div class="a" style="left:271px;top:701px;width:18px;height:18px;background:#e0e0e0"></div>
<svg style="left:273px;top:703px" width="15" height="13"><rect x="0" y="0" width="15" height="13" fill="#3c3c3c"/><rect x="2" y="2" width="11" height="4" fill="#aaa"/><rect x="3" y="8" width="9" height="4" fill="#ccc"/></svg>
<div class="a" style="left:291px;top:701px;width:36px;height:18px;background:#e0e0e0"></div>
<svg style="left:293px;top:703px" width="34" height="13"><rect x="0" y="0" width="14" height="13" fill="#3c3c3c"/><rect x="1" y="6" width="12" height="6" fill="#fff"/><rect x="18" y="0" width="16" height="13" fill="#3c3c3c"/><rect x="19" y="1" width="6" height="11" fill="#fff"/></svg>
<div class="a" style="left:329px;top:701px;width:18px;height:18px;background:#e0e0e0"></div>
<svg style="left:331px;top:703px" width="15" height="13"><path d="M1 12L6 7M3 7L7 3H14V10L10 13" fill="none" stroke="#777" stroke-width="1.2"/><path d="M9 3H14V8z" fill="#666"/></svg>
<div class="a" style="left:347px;top:700px;width:358px;height:20px;background:#efefef;border-top:1px solid #fff"></div>
<svg style="left:353px;top:705px" width="8" height="11" viewBox="0 0 8 11"><path d="M6.5 1L2 5.5 6.5 10" fill="none" stroke="#555" stroke-width="2"/></svg>
<div class="a" style="left:679px;top:700px;width:26px;height:19px;background:#cccccc"></div><div class="a" style="left:984px;top:175px;width:382px;height:27px;background:#f0f0f0"></div>
<div class="a" style="left:984px;top:228px;width:81px;height:472px;background:#fff"></div>
<div class="a" style="left:1066px;top:228px;width:279px;height:472px;background:#e4e4e4"></div>
<div class="a" style="left:1065px;top:228px;width:1px;height:472px;background:#111"></div>
<div class="a" style="left:1005px;top:228px;width:1px;height:472px;background:#0000ff"></div>
<div class="a" style="left:984px;top:287px;width:81px;height:1px;background:#0000ff"></div>
<div class="a" style="left:1347px;top:203px;width:19px;height:19px;background:#f4f4f4;border:1px solid #a8a8a8"></div>
<svg style="left:1349px;top:206px" width="15" height="14"><path d="M1.5 0V5H14M1.5 8V13H14" fill="none" stroke="#c0c0c0" stroke-width="1"/><path d="M0 6.5H15" stroke="#b0b0b0"/></svg>
<div class="a" style="left:1345px;top:222px;width:21px;height:478px;background:#f0f0f0"></div>
<div class="a" style="left:1347px;top:261px;width:19px;height:132px;background:#cccccc"></div>
<svg style="left:1351px;top:230px" width="11" height="8" viewBox="0 0 11 8"><path d="M1 6.5L5.5 2 10 6.5" fill="none" stroke="#555" stroke-width="2"/></svg>
<svg style="left:1351px;top:684px" width="11" height="8" viewBox="0 0 11 8"><path d="M1 1.5L5.5 6 10 1.5" fill="none" stroke="#555" stroke-width="2"/></svg>
<div class="a" style="left:984px;top:700px;width:341px;height:19px;background:#efefef;border-top:1px solid #fff"></div>
<div class="a" style="left:984px;top:700px;width:95px;height:19px;background:#cccccc"></div>
<svg style="left:1309px;top:705px" width="8" height="11" viewBox="0 0 8 11"><path d="M1.5 1L6 5.5 1.5 10" fill="none" stroke="#555" stroke-width="2"/></svg>
<div class="a" style="left:1325px;top:700px;width:20px;height:19px;background:#fff;border:1px solid #a8a8a8"></div>
<svg style="left:1327px;top:703px" width="16" height="14"><path d="M2.5 14V3.5H7M9.5 14V3.5H14" fill="none" stroke="#c4c4c4" stroke-width="1.2"/><path d="M0 1.5H16" stroke="#d0d0d0"/></svg>
<div class="a" style="left:1345px;top:700px;width:21px;height:19px;background:#eeeeee;border-left:2px solid #666;border-top:2px solid #666"></div>
<div class="a" style="left:705px;top:175px;width:279px;height:545px;background:#e0e0e0;border:1px solid #a0a0a0;border-bottom:none"></div>
<div class="a" style="left:706px;top:176px;width:277px;height:21px;background:#e3e3e3"></div>
<svg style="left:965px;top:179px" width="13" height="13" viewBox="0 0 13 13"><g fill="#2a2a2a"><rect x="0" y="0" width="3" height="3"/><rect x="10" y="0" width="3" height="3"/><rect x="0" y="10" width="3" height="3"/><rect x="10" y="10" width="3" height="3"/><rect x="3" y="3" width="2" height="2"/><rect x="8" y="3" width="2" height="2"/><rect x="3" y="8" width="2" height="2"/><rect x="8" y="8" width="2" height="2"/><rect x="5" y="5" width="3" height="3"/></g></svg>
<div class="a" style="left:706px;top:197px;width:256px;height:25px;background:#a2a2a2;border-top:1px solid #3c3c3c;border-bottom:1px solid #3c3c3c"></div>
<svg style="left:713px;top:206px" width="11" height="5"><path d="M0 0H11L5.5 5z" fill="#fff"/></svg>
<div class="t" style="left:737px;top:204.5px;font-size:13px;font-weight:bold;color:#fff;letter-spacing:0.5px">Цвета</div>
<svg style="left:949px;top:202px" width="5" height="15"><circle cx="2.5" cy="2.5" r="1.6" fill="#fff"/><circle cx="2.5" cy="7.5" r="1.6" fill="#fff"/><circle cx="2.5" cy="12.5" r="1.6" fill="#fff"/></svg>
<div class="a" style="left:962px;top:197px;width:21px;height:523px;background:#f0f0f0"></div>
<div class="a" style="left:963px;top:218px;width:19px;height:329px;background:#cccccc"></div>
<svg style="left:968px;top:204px" width="11" height="8" viewBox="0 0 11 8"><path d="M1 6.5L5.5 2 10 6.5" fill="none" stroke="#555" stroke-width="2"/></svg>
<svg style="left:968px;top:704px" width="11" height="8" viewBox="0 0 11 8"><path d="M1 1.5L5.5 6 10 1.5" fill="none" stroke="#555" stroke-width="2"/></svg>
<svg style="left:714px;top:231px" width="16" height="16" viewBox="0 0 16 16"><path d="M5.5 0H10.5V5.5H16V10.5H10.5V16H5.5V10.5H0V5.5H5.5z" fill="#3c3c3c"/></svg>
<svg style="left:743px;top:231px" width="17" height="16" viewBox="0 0 17 16"><path d="M0 16L2 11L11 2L15 6L6 15z" fill="#3c3c3c"/><path d="M12 1L14 -0.5L17 2.5L15.5 4.5z" fill="#3c3c3c"/></svg>
<div class="a" style="left:789px;top:229px;width:20px;height:20px;background:#fff;border:3px solid #3c3c3c;box-shadow:inset 0 0 0 2px #fff,inset 0 0 0 3px #999"></div>
<div class="a" style="left:814px;top:224px;width:28px;height:30px;background:#fff"></div>
<div class="a" style="left:818px;top:229px;width:19px;height:19px;background:#bdbdbd;border:2px solid #3c3c3c;box-shadow:inset 0 0 0 1px #fff"></div>
<div class="t" style="left:823px;top:233px;font-size:11px;color:#333">A</div>
<div class="a" style="left:847px;top:229px;width:19px;height:19px;background:#aaaaaa;border:2px solid #3c3c3c;box-shadow:inset 0 0 0 1px #fff"></div>
<svg style="left:941px;top:231px" width="15" height="16" viewBox="0 0 15 16"><rect x="4.5" y="0" width="6" height="2" fill="#3c3c3c"/><rect x="0" y="2" width="15" height="2.2" fill="#3c3c3c"/><path d="M1.5 5.5H13.5V16H1.5z" fill="#3c3c3c"/><rect x="4" y="8" width="1.5" height="6" fill="#e0e0e0"/><rect x="6.8" y="8" width="1.5" height="6" fill="#e0e0e0"/><rect x="9.6" y="8" width="1.5" height="6" fill="#e0e0e0"/></svg>
<div class="a" style="left:713px;top:260px;width:19px;height:19px;background:#aaaaaa;border:2px solid #333;box-shadow:inset 0 0 0 1px #fff"></div>
<div class="a" style="left:736px;top:258px;width:72px;height:24px;background:#fff;border:1px solid #ababab"></div>
<div class="a" style="left:739px;top:260px;width:45px;height:19px;background:#f5f5f5"></div>
<div class="t" style="left:741px;top:263.1px;font-size:13px;color:#000">100%</div>
<svg style="left:793px;top:267.0px" width="10" height="7" viewBox="0 0 10 7"><path d="M1 1L5 5.5 9 1" fill="none" stroke="#3c3c3c" stroke-width="1.8"/></svg>
<svg style="left:835px;top:264px" width="18" height="12" viewBox="0 0 18 12"><ellipse cx="6" cy="6" rx="6" ry="5.5" fill="#9a9a9a"/><ellipse cx="12" cy="6" rx="6" ry="5.5" fill="#9a9a9a"/><ellipse cx="9" cy="6" rx="3" ry="5" fill="#777"/></svg>
<div class="a" style="left:857px;top:258px;width:103px;height:24px;background:#fff;border:1px solid #ababab"></div>
<div class="a" style="left:860px;top:260px;width:77px;height:19px;background:#f5f5f5"></div>
<div class="t" style="left:862px;top:263.7px;font-size:12.3px;color:#000">Обычный</div>
<svg style="left:945px;top:267.0px" width="10" height="7" viewBox="0 0 10 7"><path d="M1 1L5 5.5 9 1" fill="none" stroke="#3c3c3c" stroke-width="1.8"/></svg>
<svg style="left:711px;top:292px" width="21" height="21" viewBox="0 0 21 21"><rect x="0.5" y="0.5" width="14" height="14" fill="#f4f4f4" stroke="#777" stroke-width="1"/><rect x="5" y="5" width="4.9" height="4.9" fill="#aaa"/><rect x="9.9" y="5" width="4.9" height="4.9" fill="#fff"/><rect x="14.8" y="5" width="4.9" height="4.9" fill="#3c3c3c"/><rect x="5" y="9.9" width="4.9" height="4.9" fill="#fff"/><rect x="9.9" y="9.9" width="4.9" height="4.9" fill="#aaa"/><rect x="14.8" y="9.9" width="4.9" height="4.9" fill="#fff"/><rect x="5" y="14.8" width="4.9" height="4.9" fill="#3c3c3c"/><rect x="9.9" y="14.8" width="4.9" height="4.9" fill="#fff"/><rect x="14.8" y="14.8" width="4.9" height="4.9" fill="#3c3c3c"/></svg>
<div class="a" style="left:736px;top:290px;width:74px;height:24px;background:#fff;border:1px solid #ababab"></div>
<div class="a" style="left:739px;top:292px;width:47px;height:19px;background:#f5f5f5"></div>
<div class="t" style="left:741px;top:295.1px;font-size:13px;color:#000">100%</div>
<svg style="left:795px;top:299.0px" width="10" height="7" viewBox="0 0 10 7"><path d="M1 1L5 5.5 9 1" fill="none" stroke="#3c3c3c" stroke-width="1.8"/></svg>
<svg style="left:861px;top:292px" width="20" height="19" viewBox="0 0 20 19"><path d="M4 0H20L17 9H1z" fill="#8c8c8c"/><path d="M4 8H19L16 19H0z" fill="#3c3c3c"/><path d="M4 8H18" stroke="#aaa" stroke-width="1"/></svg>
<div class="a" style="left:887px;top:286px;width:28px;height:30px;background:#fff"></div>
<svg style="left:891px;top:292px" width="20" height="19" viewBox="0 0 20 19"><path d="M4 0H20L17 9H1z" fill="#8c8c8c"/><path d="M4 8H19L16 19H0z" fill="#3c3c3c"/><path d="M4 8H18" stroke="#aaa" stroke-width="1"/></svg>
<div class="a" style="left:708px;top:318px;width:229px;height:24px;background:#f7f7f7;border:1px solid #b4b4b4"></div>
<div class="t" style="left:718px;top:323.5px;font-size:13px;color:#666">Поиск</div>
<svg style="left:942px;top:324px" width="14" height="14" viewBox="0 0 14 14"><circle cx="5.5" cy="5.5" r="4.2" fill="none" stroke="#555" stroke-width="2"/><path d="M8.5 8.5L13 13" stroke="#555" stroke-width="2.6"/></svg>
<div class="a" style="left:708px;top:344px;width:253px;height:376px;background:#f7f7f7;border:2px solid #a4a4a4;border-bottom:none;box-shadow:inset 1px 1px 0 #e6e6e6"></div>
<div class="a" style="left:712px;top:347px;width:15px;height:15px;background:#ffffff;border:1px solid #111"></div>
<div class="t" style="left:730px;top:349.5px;font-size:12.5px;color:#111">Белый</div>
<div class="a" style="left:712px;top:365px;width:15px;height:15px;background:#00a8ec;border:1px solid #111"></div>
<div class="t" style="left:730px;top:367.5px;font-size:12.5px;color:#111">Голубой</div>
<svg style="left:939px;top:365px" width="14" height="14" viewBox="0 0 14 14"><rect x="0" y="0" width="14" height="14" fill="#111"/><path d="M1 0H13L7 7z" fill="#ff4fd0"/><rect x="1" y="0" width="12" height="1.5" fill="#c03a90"/><path d="M1 1V13L7 7z" fill="#00d4f5"/><path d="M13 1V13L7 7z" fill="#ffd21a"/><path d="M7 7L2 13H12z" fill="#111"/><rect x="0" y="0" width="1.5" height="14" fill="#0a4e8c"/></svg>
<div class="a" style="left:712px;top:383px;width:15px;height:15px;background:#fff000;border:1px solid #111"></div>
<div class="t" style="left:730px;top:385.5px;font-size:12.5px;color:#111">Желтый</div>
<svg style="left:939px;top:383px" width="14" height="14" viewBox="0 0 14 14"><rect x="0" y="0" width="14" height="14" fill="#111"/><path d="M1 0H13L7 7z" fill="#ff4fd0"/><rect x="1" y="0" width="12" height="1.5" fill="#c03a90"/><path d="M1 1V13L7 7z" fill="#00d4f5"/><path d="M13 1V13L7 7z" fill="#ffd21a"/><path d="M7 7L2 13H12z" fill="#111"/><rect x="0" y="0" width="1.5" height="14" fill="#0a4e8c"/></svg>
<div class="a" style="left:712px;top:401px;width:15px;height:15px;background:#231f20;border:1px solid #111"></div>
<div class="t" style="left:730px;top:403.5px;font-size:12.5px;color:#111">Копия Черный</div>
<svg style="left:939px;top:401px" width="14" height="14" viewBox="0 0 14 14"><rect x="0" y="0" width="14" height="14" fill="#111"/><path d="M1 0H13L7 7z" fill="#ff4fd0"/><rect x="1" y="0" width="12" height="1.5" fill="#c03a90"/><path d="M1 1V13L7 7z" fill="#00d4f5"/><path d="M13 1V13L7 7z" fill="#ffd21a"/><path d="M7 7L2 13H12z" fill="#111"/><rect x="0" y="0" width="1.5" height="14" fill="#0a4e8c"/></svg>
<div class="a" style="left:712px;top:419px;width:15px;height:15px;background:#050505;border:1px solid #111"></div>
<div class="t" style="left:730px;top:421.5px;font-size:12.5px;color:#111">приводка</div>
<div class="a" style="left:712px;top:437px;width:15px;height:15px;background:#e6007e;border:1px solid #111"></div>
<div class="t" style="left:730px;top:439.5px;font-size:12.5px;color:#111">Пурпурный</div>
<svg style="left:939px;top:437px" width="14" height="14" viewBox="0 0 14 14"><rect x="0" y="0" width="14" height="14" fill="#111"/><path d="M1 0H13L7 7z" fill="#ff4fd0"/><rect x="1" y="0" width="12" height="1.5" fill="#c03a90"/><path d="M1 1V13L7 7z" fill="#00d4f5"/><path d="M13 1V13L7 7z" fill="#ffd21a"/><path d="M7 7L2 13H12z" fill="#111"/><rect x="0" y="0" width="1.5" height="14" fill="#0a4e8c"/></svg>
<div class="a" style="left:710px;top:454px;width:248px;height:18px;background:#3a97f7"></div>
<div class="a" style="left:712px;top:455px;width:15px;height:15px;background:#231f20;border:1px solid #111"></div>
<div class="t" style="left:730px;top:457.5px;font-size:12.5px;color:#fff">Черный</div>
<svg style="left:939px;top:455px" width="14" height="14" viewBox="0 0 14 14"><rect x="0" y="0" width="14" height="14" fill="#111"/><path d="M1 0H13L7 7z" fill="#ff4fd0"/><rect x="1" y="0" width="12" height="1.5" fill="#c03a90"/><path d="M1 1V13L7 7z" fill="#00d4f5"/><path d="M13 1V13L7 7z" fill="#ffd21a"/><path d="M7 7L2 13H12z" fill="#111"/><rect x="0" y="0" width="1.5" height="14" fill="#0a4e8c"/></svg>
<div class="a" style="left:0;top:719px;width:1366px;height:49px;background:#929292;border-top:1px solid #888"></div>
<div class="a" style="left:16px;top:721px;width:67px;height:46px;background:#a4a4a4;border:1px solid #b8b8b8"></div>
<div class="a" style="left:87px;top:721px;width:66px;height:46px;background:#a4a4a4;border:1px solid #b8b8b8"></div>
<div class="a" style="left:437px;top:721px;width:66px;height:46px;background:#b6b6b6;border:1px solid #f2f2f2"></div>
<svg style="left:31px;top:724px" width="40" height="40" viewBox="0 0 40 40"><path d="M2 4Q2 2 4 2H15L17 4H35Q37 4 37 6V10H2z" fill="#e6c46a"/><rect x="6" y="3.5" width="12" height="5" fill="#fff"/><rect x="14" y="5.5" width="12" height="5" fill="#fff"/><rect x="23" y="7.5" width="12" height="5" fill="#fff"/><rect x="7" y="4" width="2" height="3" fill="#2a2"/><rect x="15" y="6" width="2" height="3" fill="#d22"/><rect x="24" y="8" width="2" height="3" fill="#27c"/><path d="M1 11Q1 9.5 3 9.5H37Q39 9.5 39 11V36H1z" fill="#f4d67e"/><path d="M1 11H39V14H1z" fill="#f8e39c"/><path d="M4.5 24Q4.5 22 6.5 22H32.5Q34.5 22 34.5 24V39H27.5V33H11.5V39H4.5z" fill="#5db4e4"/><path d="M4.5 24Q4.5 22 6.5 22H32.5Q34.5 22 34.5 24V27H4.5z" fill="#9ad3f0"/></svg>
<svg style="left:101px;top:725px" width="38" height="38" viewBox="0 0 38 38"><circle cx="19" cy="19" r="18.5" fill="#dd4b39"/><path d="M19 19L3 10.5A18.5 18.5 0 0 0 14 36.8z" fill="#1da462"/><path d="M19 19L14 36.8A18.5 18.5 0 0 0 36.9 13H19z" fill="#ffcd40"/><path d="M19 10.5H36.5A18.5 18.5 0 0 0 3 10.5L10 23z" fill="#dd4b39"/><circle cx="19" cy="19" r="8.5" fill="#fff"/><circle cx="19" cy="19" r="6.8" fill="#4c8bf5"/></svg>
<svg style="left:171px;top:725px" width="38" height="38" viewBox="0 0 38 38"><path d="M2 4L22 2L30 8L34 34L8 36z" fill="#f0f0f0" stroke="#bbb" stroke-width="1"/><g stroke="#777" stroke-width="0.8"><path d="M6 9H18M6 13H20M6 17H16M6 21H22M7 25H18M7 29H14"/></g><path d="M12 30L32 4L36 7L16 33L11 34z" fill="#f3c63a" stroke="#c9922a" stroke-width="0.8"/><path d="M32 4L34 1.5L38 4.5L36 7z" fill="#e86060"/></svg>
<svg style="left:241px;top:725px" width="38" height="38" viewBox="0 0 38 38"><rect x="16" y="8" width="21" height="21" rx="2" fill="#0a6ac8"/><rect x="18" y="10" width="17" height="17" fill="#fff"/><path d="M18 11L26.5 19L35 11" fill="none" stroke="#0a6ac8" stroke-width="2.2"/><path d="M1 5L21 0V38L1 33z" fill="#0a72d0"/><ellipse cx="10.5" cy="19" rx="5.5" ry="7" fill="none" stroke="#fff" stroke-width="3.2"/></svg>
<svg style="left:312px;top:725px" width="37" height="38" viewBox="0 0 37 38"><defs><linearGradient id="bkg" x1="0" y1="0" x2="0" y2="1"><stop offset="0" stop-color="#e8141c"/><stop offset="0.55" stop-color="#c40a12"/><stop offset="1" stop-color="#6e0004"/></linearGradient></defs><rect width="37" height="38" rx="4" fill="url(#bkg)"/><path d="M0 14Q9 11 18 17Q25 9 37 4V21Q27 23 18 29Q9 22 0 20z" fill="#fff"/><path d="M0 23Q9 25 18 32Q27 25 37 24M0 26.5Q9 28.5 18 35.5Q27 28.5 37 27.5" fill="none" stroke="#fff" stroke-width="1.4"/></svg>
<svg style="left:381px;top:725px" width="38" height="38" viewBox="0 0 38 38"><defs><linearGradient id="opg" x1="0" y1="0" x2="1" y2="1"><stop offset="0" stop-color="#ff1f2f"/><stop offset="0.5" stop-color="#d8121e"/><stop offset="1" stop-color="#a80a14"/></linearGradient><linearGradient id="opi" x1="0" y1="0" x2="0" y2="1"><stop offset="0" stop-color="#a50c16"/><stop offset="1" stop-color="#ff4a50"/></linearGradient></defs><ellipse cx="19" cy="19" rx="18.5" ry="18.8" fill="url(#opg)"/><ellipse cx="20.5" cy="19" rx="11" ry="15.5" fill="url(#opi)"/><ellipse cx="19" cy="19" rx="8.5" ry="13.3" fill="#929292"/></svg>
<svg style="left:451px;top:724px" width="38" height="38" viewBox="0 0 38 38"><path d="M2 3L18 1L18.5 18.5L0.5 18z" fill="#74b7f1"/><path d="M20 1L36 3L37.5 18L19.5 18.5z" fill="#5aa9ee"/><path d="M0.5 20L18.5 19.5L18 37L2 35z" fill="#1b88e0"/><path d="M19.5 19.5L37.5 20L36 35L20 37z" fill="#24a0e2"/><rect x="7.5" y="7" width="23.5" height="24" fill="#fff"/><text x="19.2" y="24" font-size="13" font-weight="bold" fill="#1e8ce6" text-anchor="middle" font-family="Liberation Sans">QX</text></svg>
<svg style="left:991px;top:731px" width="30" height="27" viewBox="0 0 30 27"><circle cx="12.5" cy="12.5" r="12" fill="#fff"/><circle cx="12.5" cy="12.5" r="10" fill="#1d8fe0"/><text x="12.5" y="19" font-size="17" font-weight="bold" fill="#fff" text-anchor="middle" font-family="Liberation Sans">?</text><circle cx="22" cy="19.5" r="6.5" fill="#f5b800" stroke="#fff" stroke-width="1"/><rect x="21.2" y="17.5" width="1.8" height="5" fill="#fff"/><rect x="21.2" y="15" width="1.8" height="1.6" fill="#fff"/></svg>
<svg style="left:1033px;top:743px" width="12" height="6"><path d="M0 6L6 0 12 6z" fill="#eee"/></svg>
<svg style="left:1062px;top:736px" width="20" height="20" viewBox="0 0 20 20"><rect x="0" y="0" width="20" height="20" rx="2" fill="#d0142a"/><path d="M6 18Q2 10 10 2Q13 6 12 11Q10 16 6 18z M9 17Q15 14 16 6" fill="none" stroke="#fff" stroke-width="1.3"/></svg>
<svg style="left:1092px;top:734px" width="21" height="22" viewBox="0 0 21 22"><path d="M2 1V21" stroke="#333" stroke-width="2.4"/><path d="M2 1V21" stroke="#f4f4f4" stroke-width="1.2"/><path d="M2.5 2Q7 0 10 2Q13 4 18 3V11Q13 13 10 11Q7 9 2.5 11z" fill="#f4f4f4" stroke="#444" stroke-width="0.8"/><circle cx="15" cy="16.5" r="5" fill="#e22" stroke="#fff" stroke-width="1"/><path d="M13 14.5L17 18.5M17 14.5L13 18.5" stroke="#fff" stroke-width="1.5"/></svg>
<svg style="left:1130px;top:735px" width="13" height="20" viewBox="0 0 13 20"><rect x="4" y="0.5" width="5" height="2" fill="#eee" stroke="#333" stroke-width="0.8"/><rect x="1" y="2.5" width="11" height="17" rx="1.5" fill="#333"/><rect x="2.2" y="3.7" width="8.6" height="14.6" rx="1" fill="#f4f4f4"/><rect x="3.5" y="5" width="6" height="12" fill="#f4f4f4" stroke="#555" stroke-width="0.8"/><rect x="3.5" y="5" width="6" height="2" fill="#555"/></svg>
<svg style="left:1152px;top:737px" width="18" height="18" viewBox="0 0 18 18"><g fill="#f4f4f4" stroke="#333" stroke-width="0.9"><rect x="0.5" y="13" width="2.5" height="4.5"/><rect x="4" y="10" width="2.5" height="7.5"/><rect x="7.5" y="7" width="2.5" height="10.5"/><rect x="11" y="4" width="2.5" height="13.5"/><rect x="14.5" y="1" width="2.5" height="16.5"/></g></svg>
<svg style="left:1181px;top:735px" width="21" height="20" viewBox="0 0 21 20"><path d="M1 6H4.5L9.5 1V18L4.5 13H1z" fill="#f4f4f4" stroke="#333" stroke-width="0.9"/><circle cx="15" cy="14" r="5.2" fill="#fff"/><circle cx="15" cy="14" r="4.3" fill="none" stroke="#e21" stroke-width="2"/><path d="M12 16.8L18 11.2" stroke="#e21" stroke-width="2"/></svg>
<div class="t" style="left:1220px;top:738.5px;font-size:13.5px;color:#f4f4f4">РУС</div>
<div class="t" style="left:1290px;top:728px;font-size:13.5px;color:#f4f4f4">7:57</div>
<div class="t" style="left:1268px;top:751px;font-size:13.8px;color:#f4f4f4">29.03.2019</div></body></html>
